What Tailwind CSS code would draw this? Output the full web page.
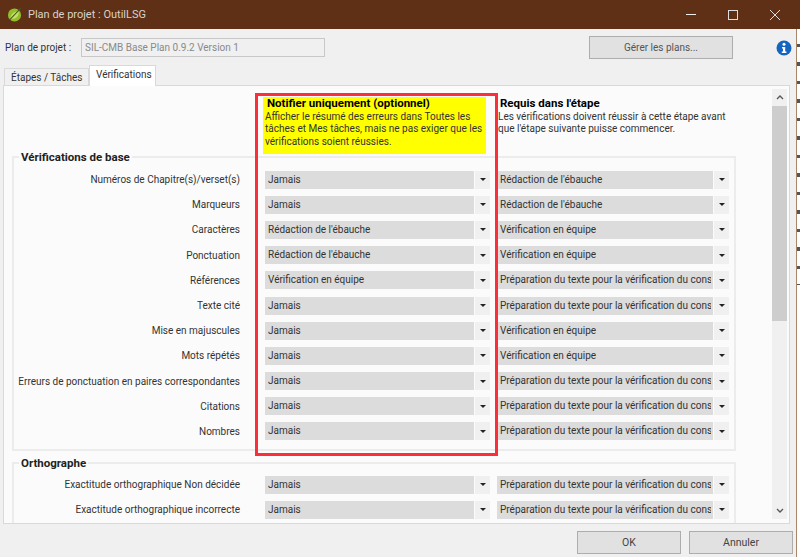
<!DOCTYPE html>
<html lang="fr">

<head>
  <meta charset="UTF-8">
  <title>Plan de projet : OutilLSG</title>
  <script src="https://cdn.jsdelivr.net/npm/@tailwindcss/browser@4"></script>
</head>

<body class="w-[800px] h-[557px] overflow-hidden bg-[#f0f0f0] font-['Roboto',sans-serif] text-[10px] leading-[13px] text-[#333]">
  <div class="relative flex flex-col h-full">
    <!-- Title bar -->
    <div class="flex items-center h-[29px] bg-[#5f3015] shrink-0 pl-[7px] text-[#d8d2cc] text-[11px]">
      <svg class="w-[15px] h-[15px]" viewBox="0 0 16 16">
        <circle cx="8" cy="8.5" r="7" fill="#93bd2a" />
        <path d="M3.5 12.5 C4 7 8 4.5 12.5 4.5 C13 9 10 13 5 12.5" fill="#c5de6a" />
        <path d="M3 13.5 L14.5 1.5" stroke="#3c5c14" stroke-width="1.1" />
      </svg>
      <span class="ml-[6px]">Plan de projet : OutilLSG</span>
      <div class="ml-auto flex items-center pr-[20px] gap-[32px]">
        <svg class="w-[10px] h-[10px]" viewBox="0 0 10 10"><path d="M0 4.5H10" stroke="#eee" stroke-width="1" /></svg>
        <svg class="w-[10px] h-[10px]" viewBox="0 0 10 10"><rect x="0.5" y="0.5" width="9" height="9" fill="none" stroke="#ddd" stroke-width="1" /></svg>
        <svg class="w-[10px] h-[10px]" viewBox="0 0 10 10"><path d="M0 0L10 10M10 0L0 10" stroke="#ddd" stroke-width="1" /></svg>
      </div>
    </div>

    <!-- Plan row -->
    <div class="flex items-center h-[36px] pt-[1px] shrink-0">
      <span class="ml-[5px] w-[76px]">Plan de projet :</span>
      <div class="w-[244px] h-[19px] border border-[#c8c8c8] bg-[#f0f0f0] text-[#8a8a8a] px-[3px] leading-[17px]">SIL-CMB Base Plan 0.9.2 Version 1</div>
      <div class="ml-[264px] w-[144px] h-[23px] border border-[#adadad] bg-[#e1e1e1] text-center leading-[21px] text-[#555]">Gérer les plans...</div>
      <svg class="ml-[43px] w-[16px] h-[16px]" viewBox="0 0 16 16">
        <circle cx="8" cy="8" r="7.5" fill="#1565c0" />
        <circle cx="8" cy="4.2" r="1.5" fill="#fff" />
        <path d="M6 7H9.2V11.5H10.4V13H5.8V11.5H7V8.4H6Z" fill="#fff" />
      </svg>
    </div>

    <!-- Tabs -->
    <div class="flex items-end h-[20px] pl-[4px] shrink-0">
      <div class="h-[17px] px-[6px] w-[85px] whitespace-nowrap border border-b-0 border-[#d9d9d9] bg-[#f0f0f0] leading-[17px]">Étapes / Tâches</div>
      <div class="relative -mb-px h-[21px] w-[67px] px-[6px] whitespace-nowrap border border-b-0 border-[#d9d9d9] bg-white leading-[17px] z-10">Vérifications</div>
    </div>

    <!-- Tab panel -->
    <div class="relative mx-[3px] w-[787px] h-[439px] border border-[#d9d9d9] bg-[#fbfbfb] overflow-hidden">
      <!-- Column headers -->
      <div class="flex h-[70px] pt-[11px] pl-[259px]">
        <div class="w-[223px] h-[57px] bg-[#ffff00] px-[2px] text-[#333]">
          <div class="font-bold text-[11.5px] text-black pl-[2px] leading-[12px]">Notifier uniquement (optionnel)</div>
          <p class="mt-[1.5px] leading-[12.5px]">Afficher le résumé des erreurs dans Toutes les tâches et Mes tâches, mais ne pas exiger que les vérifications soient réussies.</p>
        </div>
        <div class="ml-[12px] w-[232px]">
          <div class="font-bold text-[11.5px] text-black pl-[2px] leading-[12px]">Requis dans l'étape</div>
          <p class="mt-[1.5px] leading-[12.5px]">Les vérifications doivent réussir à cette étape avant que l'étape suivante puisse commencer.</p>
        </div>
      </div>

      <div id="groups"></div>

      <!-- Scrollbar -->
      <div class="absolute top-[3px] left-[768px] w-[15px] h-[430px] flex flex-col bg-[#f0f0f0]">
        <div class="h-[17px] flex items-center justify-center">
          <svg class="w-[8px] h-[5px]" viewBox="0 0 8 5"><path d="M1 4L4 1L7 4" fill="none" stroke="#555" stroke-width="1.3" /></svg>
        </div>
        <div class="h-[215px] bg-[#cdcdcd]"></div>
        <div class="mt-auto h-[17px] flex items-center justify-center">
          <svg class="w-[8px] h-[5px]" viewBox="0 0 8 5"><path d="M1 1L4 4L7 1" fill="none" stroke="#555" stroke-width="1.3" /></svg>
        </div>
      </div>
    </div>

    <!-- Footer -->
    <div class="flex justify-end gap-[8px] pt-[7px] pr-[7px]">
      <div class="w-[104px] h-[23px] border border-[#adadad] bg-[#e1e1e1] text-center leading-[21px] text-[10.5px] text-[#444]">OK</div>
      <div class="w-[104px] h-[23px] border border-[#adadad] bg-[#e1e1e1] text-center leading-[21px] text-[10.5px] text-[#444]">Annuler</div>
    </div>

    <!-- Red annotation -->
    <div class="absolute left-[255px] top-[93px] w-[243px] h-[363px] border-[3px] border-[#fb2f3a]"></div>

    <!-- Window edge and the page showing behind it -->
    <div class="absolute left-[796px] top-[29px] w-[1px] h-[528px] bg-[#a9856a]"></div>
    <div class="absolute left-[797px] top-[29px] w-[3px] h-[528px] bg-white"></div>
    <div class="absolute left-[797px] top-[29px] w-[3px] h-[256px] bg-[repeating-linear-gradient(180deg,#fff_0,#fff_15px,#555_15px,#555_18.5px)]"></div>
  </div>

  <script>
    const J = 'Jamais';
    const R = "Rédaction de l'ébauche";
    const V = 'Vérification en équipe';
    const P = 'Préparation du texte pour la vérification du conseiller';

    const groups = [
      {
        title: 'Vérifications de base',
        box: 'relative ml-[8px] w-[724px] h-[295px] border-2 border-[#ececec]',
        inner: 'pt-[9px]',
        rows: [
          ['Numéros de Chapitre(s)/verset(s)', J, R],
          ['Marqueurs', J, R],
          ['Caractères', R, V],
          ['Ponctuation', R, V],
          ['Références', V, P],
          ['Texte cité', J, P],
          ['Mise en majuscules', J, V],
          ['Mots répétés', J, V],
          ['Erreurs de ponctuation en paires correspondantes', J, P],
          ['Citations', J, P],
          ['Nombres', J, P]
        ]
      },
      {
        title: 'Orthographe',
        box: 'relative ml-[8px] mt-[11px] w-[724px] h-[100px] border-2 border-[#ececec]',
        inner: 'pt-[8px]',
        rows: [
          ['Exactitude orthographique Non décidée', J, P],
          ['Exactitude orthographique incorrecte', J, P]
        ]
      }
    ];

    const arrow = '<div class="w-[15px] bg-[#f0f0f0] flex items-center justify-center"><div class="border-x-[3px] border-t-[3px] border-x-transparent border-t-[#222]"></div></div>';

    function combo(text, outer, inner) {
      return `<div class="flex gap-[1px] h-[18px] ${outer}"><div class="${inner} bg-[#dcdcdc] border-l-[3px] border-r-[2px] border-[#dcdcdc] leading-[18px] overflow-hidden whitespace-nowrap">${text}</div>${arrow}</div>`;
    }

    document.getElementById('groups').innerHTML = groups.map(group => {
      const rows = group.rows.map(row => `
        <div class="flex items-center h-[25.2px]">
          <span class="w-[226px] text-right whitespace-nowrap">${row[0]}</span>
          ${combo(row[1], 'ml-[25px] w-[225px]', 'w-[209px]')}
          ${combo(row[2], 'ml-[7px] w-[232px]', 'w-[216px]')}
        </div>`).join('');
      return `<div class="${group.box}">
        <div class="absolute -top-[7px] left-[5px] bg-[#fbfbfb] px-[2px] font-bold text-[11.5px] text-[#222] leading-[13px]">${group.title}</div>
        <div class="${group.inner}">${rows}</div>
      </div>`;
    }).join('');
  </script>
</body>

</html>
